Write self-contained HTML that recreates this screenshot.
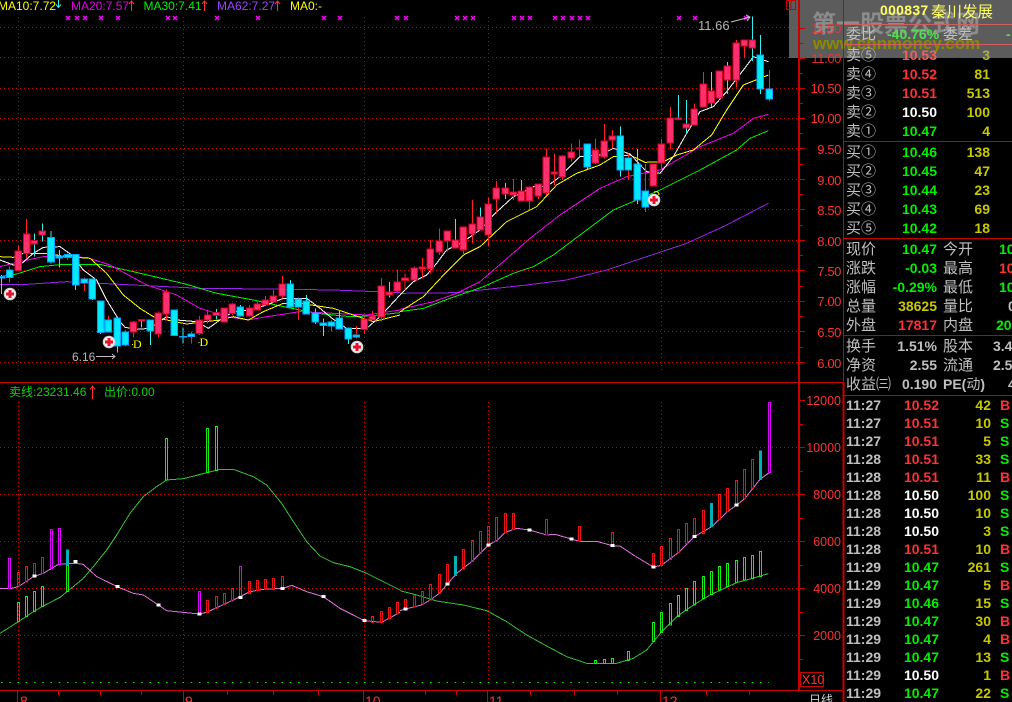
<!DOCTYPE html>
<html><head><meta charset="utf-8"><style>
html,body{margin:0;padding:0;background:#000;width:1012px;height:702px;overflow:hidden}
svg{position:absolute;left:0;top:0;display:block}
text{font-family:"Liberation Sans","WenQuanYi Zen Hei","Noto Sans CJK SC",sans-serif}
.b{font-size:14px;font-weight:700}
.l{font-size:15px;fill:#c0c0c0;font-family:"WenQuanYi Zen Hei","Noto Sans CJK SC",sans-serif}
.a{font-size:13px;fill:#ff3232;text-anchor:end;letter-spacing:-.4px}
.v{font-size:12.5px;fill:#ff3232;text-anchor:end}
.m{font-size:12px}
.e{text-anchor:end}
.r{fill:#ff3232}.g{fill:#00f000}.w{fill:#fff}.y{fill:#c8c800}.s{fill:#c0c0c0}
.c path,.c polyline{shape-rendering:crispEdges}
</style></head><body>
<svg width="1012" height="702" viewBox="0 0 1012 702" xmlns="http://www.w3.org/2000/svg">
<defs>
<g id="x"><path d="M-2-2L2 2M2-2L-2 2" stroke="#f0f" stroke-width="1.5" fill="none"/></g>
<g id="p"><circle r="6.3" fill="#d8d8d8"/><circle r="5" fill="#f2f2f2"/><path d="M-4 0H4M0-4V4" stroke="#e8102a" stroke-width="3"/></g>
</defs>
<!-- grid -->
<g class="c" fill="none" stroke="#d00000">
<path stroke-dasharray="1 3" d="M0 27.5H798M0 57.5H798M0 88.5H798M0 118.5H798M0 148.5H798M0 179.5H798M0 209.5H798M0 240.5H798M0 270.5H798M0 301.5H798M0 331.5H798M0 362.5H798"/>
<path stroke-dasharray="1 3" d="M18.5 17V370M183.5 17V370M364.5 17V370M488.5 17V370M661.5 17V370"/>
<path stroke-dasharray="1 3" d="M0 447.5H798M0 494.5H798M0 541.5H798M0 588.5H798M0 635.5H798"/>
<path stroke-dasharray="1 3" d="M18.5 402V686M183.5 402V686M364.5 402V686M488.5 402V686M661.5 402V686"/>
</g>
<path d="M1 682.5H769" stroke="#00f000" stroke-dasharray="1.5 6.75" fill="none"/>
<!-- top price chart left -->
<g class="c" transform="scale(.33333)" fill="none" stroke-width="3">
<polyline stroke="#a020f0" points="0,853 80,853 200,845 400,855 600,865 800,867 1000,870 1200,878"/>
<polyline stroke="#00f000" points="0,830 50,822 120,800 190,793 300,793 400,815 560,853 650,880 760,900 850,920 950,940 1050,950 1110,948 1200,938"/>
<polyline stroke="#f000f0" points="0,800 60,785 130,770 260,772 330,795 440,855 530,885 600,925 680,950 745,960 800,950 900,935 1000,940 1100,945 1200,930"/>
<polyline stroke="#ffff00" points="0,770 40,772 70,760 140,760 200,770 270,775 320,820 370,885 420,925 460,950 500,960 560,972 590,968 660,960 700,950 745,960 790,935 850,910 900,910 1000,925 1060,945 1120,965 1200,945"/>
<polyline stroke="#fff" points="0,780 40,795 60,795 100,760 130,742 180,740 215,765 250,810 290,840 320,900 360,965 375,982 410,988 450,985 500,950 530,960 590,965 625,985 660,960 700,935 750,930 800,915 850,895 920,895 960,925 1000,958 1040,985 1100,985 1140,950 1200,885"/>
<path stroke="#ff2020" d="M29 800V848M55 737V812M80 657V775M203 760V780M253 832V873M325 948V960M376 990V1040M400 963V1012M475 935V1013M499 868V962M574 995V1030M598 948V1005M623 933V970M673 922V968M697 909V945M749 915V948M772 903V932M796 888V915M820 870V906M847 828V895M895 892V960M994 960V995M1069 978V1015M1093 950V1000M1117 933V960M1144 834V965M1192 808V880"/>
<path stroke="#30f0f0" d="M5 825V882M103 700V770M127 670V725M153 693V790M178 750V803M227 763V870M277 837V900M302 903V1002M352 954V1058M425 958V982M451 960V1035M523 930V1007M549 982V1030M649 927V958M721 915V948M871 840V921M919 885V942M946 925V972M970 955V1008M1018 930V987M1045 984V1032M1168 846V892"/>
<path fill="#ff2f6e" stroke="#d80028" d="M45 753h20V812h-20zM70 702h20V760h-20zM93 722h20V732h-20zM117 693h20V705h-20zM390 966h20V996h-20zM415 958h20V963h-20zM465 939h20V1002h-20zM489 876h20V942h-20zM588 960h20V1000h-20zM613 945h20V960h-20zM639 938h20V947h-20zM663 924h20V966h-20zM687 912h20V940h-20zM739 924h20V948h-20zM762 912h20V930h-20zM786 900h20V915h-20zM810 888h20V906h-20zM837 852h20V888h-20zM1083 957h20V989h-20zM1107 948h20V960h-20zM1134 858h20V951h-20zM1158 876h20V885h-20zM1182 846h20V873h-20z"/>
<path fill="#00eaff" stroke="#00a4ff" d="M-5 830h20V834h-20zM19 810h20V833h-20zM143 712h20V786h-20zM168 768h20V774h-20zM193 763h20V772h-20zM217 763h20V855h-20zM243 837h20V849h-20zM267 837h20V897h-20zM292 903h20V998h-20zM315 960h20V996h-20zM342 954h20V1038h-20zM366 996h20V1035h-20zM441 960h20V993h-20zM513 930h20V1007h-20zM539 1009h20V1011h-20zM564 1002h20V1010h-20zM711 921h20V948h-20zM861 852h20V921h-20zM885 897h20V921h-20zM909 903h20V942h-20zM936 939h20V966h-20zM960 969h20V977h-20zM984 966h20V978h-20zM1008 954h20V987h-20zM1035 984h20V1017h-20zM1059 1005h20V1011h-20z"/>
</g>
<!-- top price chart right -->
<g class="c" transform="translate(400 0) scale(.33333)" fill="none" stroke-width="3">
<polyline stroke="#a020f0" points="0,880 170,878 380,855 500,840 620,810 740,770 860,730 980,675 1105,610"/>
<polyline stroke="#00f000" points="0,935 70,925 150,895 250,860 340,820 400,800 460,765 540,705 640,630 710,600 780,570 900,510 1010,450 1050,415 1105,392"/>
<polyline stroke="#f000f0" points="0,928 100,905 170,880 240,845 310,785 390,715 480,645 600,565 680,530 780,510 900,440 1000,400 1060,355 1105,343"/>
<polyline stroke="#ffff00" points="0,935 70,890 140,815 190,765 240,740 320,665 410,620 470,555 530,520 600,495 640,470 690,465 735,487 790,485 830,465 880,450 935,405 980,330 1030,255 1105,225"/>
<polyline stroke="#fff" points="0,885 40,845 80,825 110,790 140,750 190,725 240,690 280,645 340,590 400,560 440,560 480,530 540,470 600,465 640,445 690,462 740,515 780,520 820,470 860,400 900,335 940,320 980,275 1030,210 1060,170 1105,185"/>
<path stroke="#ff2020" d="M15 820V870M43 800V840M67 774V835M91 720V820M118 685V765M142 693V755M190 681V765M217 600V730M265 592V740M289 543V640M340 537V600M388 561V628M415 552V597M439 445V585M463 460V555M487 465V540M514 430V485M538 418V470M586 415V492M613 372V475M637 390V445M685 460V540M736 492V636M760 492V558M784 417V508M811 321V447M883 310V375M910 216V321M958 213V294M1009 120V262M1033 120V172M1108 210V305"/>
<path stroke="#30f0f0" d="M166 657V745M241 622V692M316 549V597M364 540V603M562 432V507M661 380V530M712 447V612M835 285V360M859 300V402M934 216V321M982 186V282M1057 50V183M1081 105V282"/>
<path fill="#ff2f6e" stroke="#d80028" d="M5 834h20V842h-20zM33 804h20V840h-20zM57 801h20V807h-20zM81 747h20V807h-20zM108 723h20V756h-20zM132 693h20V723h-20zM156 720h20V744h-20zM180 681h20V750h-20zM207 672h20V702h-20zM231 651h20V690h-20zM255 612h20V705h-20zM279 564h20V597h-20zM306 564h20V582h-20zM330 576h20V585h-20zM354 573h20V603h-20zM378 561h20V603h-20zM405 552h20V588h-20zM429 471h20V579h-20zM453 516h20V522h-20zM477 468h20V531h-20zM504 456h20V474h-20zM528 444h20V447h-20zM576 450h20V489h-20zM603 423h20V471h-20zM627 408h20V420h-20zM750 492h20V558h-20zM774 432h20V489h-20zM801 354h20V429h-20zM825 354h20V359h-20zM849 372h20V384h-20zM873 327h20V375h-20zM900 252h20V321h-20zM924 273h20V309h-20zM948 213h20V294h-20zM972 198h20V240h-20zM999 129h20V240h-20zM1023 120h20V138h-20zM1047 120h20V144h-20z"/>
<path fill="#00eaff" stroke="#00a4ff" d="M552 432h20V501h-20zM651 408h20V510h-20zM675 474h20V510h-20zM702 492h20V600h-20zM726 573h20V621h-20zM1071 165h20V267h-20zM1098 267h20V297h-20z"/>
</g>
<!-- signal marks -->
<g>
<use href="#x" x="68" y="18"/><use href="#x" x="77" y="18"/><use href="#x" x="85" y="18"/><use href="#x" x="101" y="18"/><use href="#x" x="118" y="18"/><use href="#x" x="168" y="18"/><use href="#x" x="175" y="18"/><use href="#x" x="217" y="18"/><use href="#x" x="258" y="18"/><use href="#x" x="324" y="18"/><use href="#x" x="340" y="18"/><use href="#x" x="397" y="18"/><use href="#x" x="406" y="18"/><use href="#x" x="457" y="18"/><use href="#x" x="465" y="18"/><use href="#x" x="473" y="18"/><use href="#x" x="514" y="18"/><use href="#x" x="522" y="18"/><use href="#x" x="530" y="18"/><use href="#x" x="555" y="18"/><use href="#x" x="563" y="18"/><use href="#x" x="572" y="18"/><use href="#x" x="580" y="18"/><use href="#x" x="588" y="18"/><use href="#x" x="679" y="18"/><use href="#x" x="695" y="18"/><use href="#x" x="746" y="18"/>
<use href="#p" x="10" y="294"/><use href="#p" x="109" y="342"/><use href="#p" x="357" y="347"/><use href="#p" x="654" y="200"/>
<path d="M654 192c3-1 5 0 5 3" stroke="#ffff00" fill="none"/>
</g>
<text x="133" y="348" fill="#ffff00" style="font:12px 'Liberation Serif',serif">D</text>
<text x="199.5" y="346" fill="#ffff00" style="font:12px 'Liberation Serif',serif">D</text>
<path d="M132 344.5h1M198.5 342.5h1" stroke="#ffff00" fill="none"/>
<text x="72" y="361" class="m" fill="#b4b4b4">6.16</text>
<path d="M96 356.5H115M112 354l3 2.5-3 2.5" stroke="#c0c0c0" fill="none"/>
<text x="698" y="30" class="m" fill="#b4b4b4" style="font-size:13px">11.66</text>
<path d="M731 22L750 17M746 15l4 2-3 4" stroke="#c0c0c0" fill="none"/>
<!-- MA title -->
<g class="m">
<text x="-2" y="10" fill="#ffff00">MA10:7.72</text>
<text x="71" y="10" fill="#e000e0">MA20:7.57</text>
<text x="143.5" y="10" fill="#00f000">MA30:7.41</text>
<text x="217" y="10" fill="#a040ff">MA62:7.27</text>
<text x="290" y="10" fill="#ffff00">MA0:-</text>
</g>
<path d="M58.5 0V7M56 4.5l2.5 3 2.5-3" stroke="#30f0f0" fill="none"/>
<path d="M131.5 11V1M129 4l2.5-3 2.5 3" stroke="#ff3232" fill="none"/>
<path d="M204.5 11V1M202 4l2.5-3 2.5 3" stroke="#ff3232" fill="none"/>
<path d="M277.5 11V1M275 4l2.5-3 2.5 3" stroke="#ff3232" fill="none"/>
<!-- lower chart left -->
<g class="c" transform="translate(0 380) scale(.33333)" fill="none" stroke-width="3">
<polyline stroke="#36c036" points="0,760 55,725 100,695 130,678 180,652 205,632 250,595 280,560 320,510 350,465 390,400 430,350 470,320 500,300 550,296 625,277 660,268 700,268 760,290 800,315 845,370 880,425 920,485 960,528 1000,548 1050,560 1100,580 1150,605 1200,630"/>
<polyline stroke="#e070e0" points="0,625 35,625 55,620 100,590 130,580 175,553 226,550 250,553 290,590 352,620 400,640 430,645 475,675 500,692 598,702 620,697 700,660 750,635 790,628 850,625 875,616 920,635 970,650 1020,685 1093,722 1145,727 1200,697"/>
<path stroke="#e000ff" d="M25 535h6V625h-6zM151 448h6V566h-6zM175 445h6V553h-6zM595 634h6V702h-6zM718 559h6V652h-6z"/>
<path stroke="#f01010" d="M52 577h6V618h-6zM76 559h6V606h-6zM100 550h6V590h-6zM124 532h6V580h-6zM619 661h6V697h-6zM646 649h6V685h-6zM670 640h6V673h-6zM694 625h6V663h-6zM745 604h6V640h-6zM769 601h6V632h-6zM793 598h6V628h-6zM817 595h6V628h-6zM844 589h6V625h-6zM1114 709h6V727h-6zM1141 694h6V727h-6zM1165 682h6V715h-6zM1189 667h6V700h-6z"/>
<path stroke="#10f010" d="M52 667h6V725h-6zM76 649h6V710h-6zM100 634h6V695h-6zM124 619h6V680h-6zM199 556h6V634h-6zM496 175h6V300h-6zM619 145h6V278h-6zM646 139h6V271h-6z"/>
<path fill="#00b0b8" stroke="#00b0b8" d="M199 510h6V555h-6z"/>
<path stroke="#fff" stroke-width="9" d="M97 588h12M220 545h12M346 620h12M469 675h12M592 702h12M715 652h12M841 625h12M964 650h12M1087 722h12"/>
</g>
<!-- lower chart right -->
<g class="c" transform="translate(400 380) scale(.33333)" fill="none" stroke-width="3">
<polyline stroke="#36c036" points="0,632 50,645 110,663 190,675 260,692 320,725 380,765 440,798 500,830 560,850 650,850 700,835 740,810 785,755 830,710 880,675 930,645 1010,608 1050,597 1105,581"/>
<polyline stroke="#e070e0" points="0,692 16,687 65,675 90,660 118,640 142,612 170,580 215,545 265,495 290,482 316,457 350,445 388,450 440,465 465,463 514,477 538,484 590,484 637,497 660,498 700,525 760,561 784,556 835,518 883,470 935,440 985,393 1010,375 1035,355 1080,298 1108,278"/>
<path stroke="#f01010" d="M13 658h6V687h-6zM40 648h6V680h-6zM64 634h6V672h-6zM88 613h6V660h-6zM115 583h6V640h-6zM139 553h6V615h-6zM187 508h6V567h-6zM214 481h6V545h-6zM238 454h6V520h-6zM262 439h6V495h-6zM286 412h6V484h-6zM313 400h6V457h-6zM337 400h6V448h-6zM436 418h6V465h-6zM535 439h6V484h-6zM634 457h6V497h-6zM757 520h6V561h-6zM781 499h6V556h-6zM808 475h6V538h-6zM832 448h6V518h-6zM856 430h6V490h-6zM880 415h6V470h-6zM907 391h6V460h-6zM955 343h6V418h-6zM979 325h6V395h-6zM1006 301h6V375h-6zM1030 268h6V355h-6zM1054 238h6V325h-6z"/>
<path fill="#00b0b8" stroke="#00b0b8" d="M163 529h6V587h-6zM931 370h6V440h-6zM1078 213h6V298h-6z"/>
<path stroke="#e000ff" d="M1105 67h6V278h-6z"/>
<path stroke="#10f010" d="M583 841h6V850h-6zM610 838h6V850h-6zM634 835h6V850h-6zM682 814h6V841h-6zM757 727h6V785h-6zM781 697h6V758h-6zM808 670h6V735h-6zM832 646h6V710h-6zM856 625h6V692h-6zM880 604h6V675h-6zM907 589h6V656h-6zM931 574h6V644h-6zM955 559h6V630h-6zM979 550h6V620h-6zM1006 541h6V608h-6zM1030 532h6V600h-6zM1054 526h6V596h-6zM1078 514h6V590h-6z"/>
<path stroke="#fff" stroke-width="9" d="M10 687h12M136 612h12M259 495h12M382 450h12M508 477h12M631 497h12M754 561h12M877 470h12M1004 375h12"/>
</g>
<text x="9" y="396" fill="#10d010" style="font-size:12px">卖线:23231.46</text>
<path d="M92.5 399V386M90 389.5l2.5-3.5 2.5 3.5" stroke="#ff3232" fill="none"/>
<text x="104" y="396" fill="#10d010" style="font-size:12px">出价:0.00</text>
<!-- watermark overlay -->
<rect x="789" y="0" width="223" height="58" fill="#808080" fill-opacity=".72"/>
<text x="812" y="32" style="font-size:24px;font-weight:700;font-family:'Noto Sans CJK SC',sans-serif" fill="#8c8c8c">第一股票公式网</text>
<text x="813" y="49" style="font-size:17px;font-weight:700" fill="#8a8a00">www.chnmoney.com</text>
<!-- frame lines -->
<g class="c" fill="none" stroke="#c80000">
<path d="M0 382.5H843M0 690.5H843"/>
<path stroke-width="2" d="M799 0V690M843.5 382V702"/>
<path d="M843.5 0V382M844 141.5H1012M844 238.5H1012M844 335.5H1012M844 395.5H1012"/>
<path stroke="#d06060" d="M844 24.5H1012M844 44.5H1012"/>
<path d="M800 28.5H805M800 43.5H803M800 58.5H805M800 73.5H803M800 88.5H805M800 103.5H803M800 118.5H805M800 133.5H803M800 148.5H805M800 164.5H803M800 179.5H805M800 194.5H803M800 209.5H805M800 225.5H803M800 240.5H805M800 255.5H803M800 270.5H805M800 286.5H803M800 301.5H805M800 316.5H803M800 331.5H805M800 347.5H803M800 362.5H805"/>
<path d="M800 400.5H805M800 424.5H803M800 447.5H805M800 471.5H803M800 494.5H805M800 518.5H803M800 541.5H805M800 565.5H803M800 588.5H805M800 612.5H803M800 635.5H805M800 659.5H803"/>
<path d="M17.5 690V702M183.5 690V702M363.5 690V702M487.5 690V702M660.5 690V702"/>
<path d="M58.5 690V695M100.5 690V695M141.5 690V695M227.5 690V695M273.5 690V695M318.5 690V695M425.5 690V695M456.5 690V695M530.5 690V695M574.5 690V695M617.5 690V695M706.5 690V695M749.5 690V695"/>
<path d="M786.5 .5H795.5V9.5H786.5ZM791 .5V9.5"/>
<path d="M800.5 672.5H823.5V686.5H800.5Z"/>
</g>
<text x="20" y="706" style="font-size:14px" fill="#ff3232">8</text>
<text x="185" y="706" style="font-size:14px" fill="#ff3232">9</text>
<text x="365" y="706" style="font-size:14px" fill="#ff3232">10</text>
<text x="489" y="706" style="font-size:14px" fill="#ff3232">11</text>
<text x="662" y="706" style="font-size:14px" fill="#ff3232">12</text>
<text x="802" y="684" fill="#ff3232" style="font-size:12.5px">X10</text>
<text x="809" y="704" fill="#d0d0d0" style="font-size:12px;font-family:'WenQuanYi Zen Hei','Noto Sans CJK SC',sans-serif">日线</text>
<!-- price axis labels -->
<text class="a" x="841" y="33" fill-opacity=".75">11.50</text>
<text class="a" x="841" y="63" fill-opacity=".85">11.00</text>
<text class="a" x="841" y="93">10.50</text>
<text class="a" x="841" y="123">10.00</text>
<text class="a" x="841" y="154">9.50</text>
<text class="a" x="841" y="185">9.00</text>
<text class="a" x="841" y="215">8.50</text>
<text class="a" x="841" y="246">8.00</text>
<text class="a" x="841" y="276">7.50</text>
<text class="a" x="841" y="306">7.00</text>
<text class="a" x="841" y="337">6.50</text>
<text class="a" x="841" y="368">6.00</text>
<text class="v" x="841" y="405">12000</text>
<text class="v" x="841" y="452">10000</text>
<text class="v" x="841" y="499">8000</text>
<text class="v" x="841" y="546">6000</text>
<text class="v" x="841" y="593">4000</text>
<text class="v" x="841" y="640">2000</text>
<!-- quote panel -->
<text x="880" y="15" class="b" fill="#ffff64" style="letter-spacing:.3px">000837</text>
<text x="931" y="17" fill="#ffff64" style="font-size:15.5px;font-family:'WenQuanYi Zen Hei','Noto Sans CJK SC',sans-serif">秦川发展</text>
<text class="l" x="846" y="39" fill="#dcdcdc">委比</text>
<text class="b" x="887" y="39" fill="#50e050">-40.76%</text>
<text class="l" x="943" y="39">委差</text>
<text class="b" x="1006" y="39" fill="#50e050">-</text>
<g>
<text class="l" x="846" y="60">卖⑤</text><text class="b e" x="937" y="60" fill="#f06060">10.53</text><text class="b e" x="990" y="60" fill="#b0b040">3</text>
<text class="l" x="846" y="79">卖④</text><text class="b e r" x="937" y="79">10.52</text><text class="b e y" x="990" y="79">81</text>
<text class="l" x="846" y="98">卖③</text><text class="b e r" x="937" y="98">10.51</text><text class="b e y" x="990" y="98">513</text>
<text class="l" x="846" y="117">卖②</text><text class="b e w" x="937" y="117">10.50</text><text class="b e y" x="990" y="117">100</text>
<text class="l" x="846" y="136">卖①</text><text class="b e g" x="937" y="136">10.47</text><text class="b e y" x="990" y="136">4</text>
<text class="l" x="846" y="157">买①</text><text class="b e g" x="937" y="157">10.46</text><text class="b e y" x="990" y="157">138</text>
<text class="l" x="846" y="176">买②</text><text class="b e g" x="937" y="176">10.45</text><text class="b e y" x="990" y="176">47</text>
<text class="l" x="846" y="195">买③</text><text class="b e g" x="937" y="195">10.44</text><text class="b e y" x="990" y="195">23</text>
<text class="l" x="846" y="214">买④</text><text class="b e g" x="937" y="214">10.43</text><text class="b e y" x="990" y="214">69</text>
<text class="l" x="846" y="233">买⑤</text><text class="b e g" x="937" y="233">10.42</text><text class="b e y" x="990" y="233">18</text>
<text class="l" x="846" y="254">现价</text><text class="b e g" x="937" y="254">10.47</text><text class="l" x="943" y="254">今开</text><text class="b g" x="999" y="254">10.49</text>
<text class="l" x="846" y="273">涨跌</text><text class="b e g" x="937" y="273">-0.03</text><text class="l" x="943" y="273">最高</text><text class="b r" x="999" y="273">10.58</text>
<text class="l" x="846" y="292">涨幅</text><text class="b e g" x="937" y="292">-0.29%</text><text class="l" x="943" y="292">最低</text><text class="b g" x="999" y="292">10.38</text>
<text class="l" x="846" y="311">总量</text><text class="b e y" x="937" y="311">38625</text><text class="l" x="943" y="311">量比</text><text class="b s" x="1008" y="311">0.78</text>
<text class="l" x="846" y="330">外盘</text><text class="b e r" x="937" y="330">17817</text><text class="l" x="943" y="330">内盘</text><text class="b g" x="996" y="330">20808</text>
<text class="l" x="846" y="351">换手</text><text class="b e s" x="937" y="351">1.51%</text><text class="l" x="943" y="351">股本</text><text class="b s" x="993" y="351">3.40</text>
<text class="l" x="846" y="370">净资</text><text class="b e s" x="937" y="370">2.55</text><text class="l" x="943" y="370">流通</text><text class="b s" x="993" y="370">2.56</text>
<text class="l" x="846" y="389">收益㈢</text><text class="b e s" x="937" y="389">0.190</text><text class="b s" x="943" y="389">PE(<tspan style="font-weight:400;font-family:'WenQuanYi Zen Hei','Noto Sans CJK SC',sans-serif">动</tspan>)</text><text class="b s" x="1008" y="389">41</text>
</g>
<g class="b">
<text class="s" x="846" y="410">11:27</text><text class="e r" x="939" y="410">10.52</text><text class="e y" x="991" y="410">42</text><text class="r" x="1000" y="410">B</text>
<text class="s" x="846" y="428">11:27</text><text class="e r" x="939" y="428">10.51</text><text class="e y" x="991" y="428">10</text><text class="g" x="1000" y="428">S</text>
<text class="s" x="846" y="446">11:27</text><text class="e r" x="939" y="446">10.51</text><text class="e y" x="991" y="446">5</text><text class="g" x="1000" y="446">S</text>
<text class="s" x="846" y="464">11:28</text><text class="e r" x="939" y="464">10.51</text><text class="e y" x="991" y="464">33</text><text class="g" x="1000" y="464">S</text>
<text class="s" x="846" y="482">11:28</text><text class="e r" x="939" y="482">10.51</text><text class="e y" x="991" y="482">11</text><text class="r" x="1000" y="482">B</text>
<text class="s" x="846" y="500">11:28</text><text class="e w" x="939" y="500">10.50</text><text class="e y" x="991" y="500">100</text><text class="g" x="1000" y="500">S</text>
<text class="s" x="846" y="518">11:28</text><text class="e w" x="939" y="518">10.50</text><text class="e y" x="991" y="518">10</text><text class="g" x="1000" y="518">S</text>
<text class="s" x="846" y="536">11:28</text><text class="e w" x="939" y="536">10.50</text><text class="e y" x="991" y="536">3</text><text class="g" x="1000" y="536">S</text>
<text class="s" x="846" y="554">11:28</text><text class="e r" x="939" y="554">10.51</text><text class="e y" x="991" y="554">10</text><text class="r" x="1000" y="554">B</text>
<text class="s" x="846" y="572">11:29</text><text class="e g" x="939" y="572">10.47</text><text class="e y" x="991" y="572">261</text><text class="g" x="1000" y="572">S</text>
<text class="s" x="846" y="590">11:29</text><text class="e g" x="939" y="590">10.47</text><text class="e y" x="991" y="590">5</text><text class="r" x="1000" y="590">B</text>
<text class="s" x="846" y="608">11:29</text><text class="e g" x="939" y="608">10.46</text><text class="e y" x="991" y="608">15</text><text class="g" x="1000" y="608">S</text>
<text class="s" x="846" y="626">11:29</text><text class="e g" x="939" y="626">10.47</text><text class="e y" x="991" y="626">30</text><text class="r" x="1000" y="626">B</text>
<text class="s" x="846" y="644">11:29</text><text class="e g" x="939" y="644">10.47</text><text class="e y" x="991" y="644">4</text><text class="r" x="1000" y="644">B</text>
<text class="s" x="846" y="662">11:29</text><text class="e g" x="939" y="662">10.47</text><text class="e y" x="991" y="662">13</text><text class="g" x="1000" y="662">S</text>
<text class="s" x="846" y="680">11:29</text><text class="e w" x="939" y="680">10.50</text><text class="e y" x="991" y="680">1</text><text class="r" x="1000" y="680">B</text>
<text class="s" x="846" y="698">11:29</text><text class="e g" x="939" y="698">10.47</text><text class="e y" x="991" y="698">22</text><text class="g" x="1000" y="698">S</text>
</g>
</svg>
</body></html>
